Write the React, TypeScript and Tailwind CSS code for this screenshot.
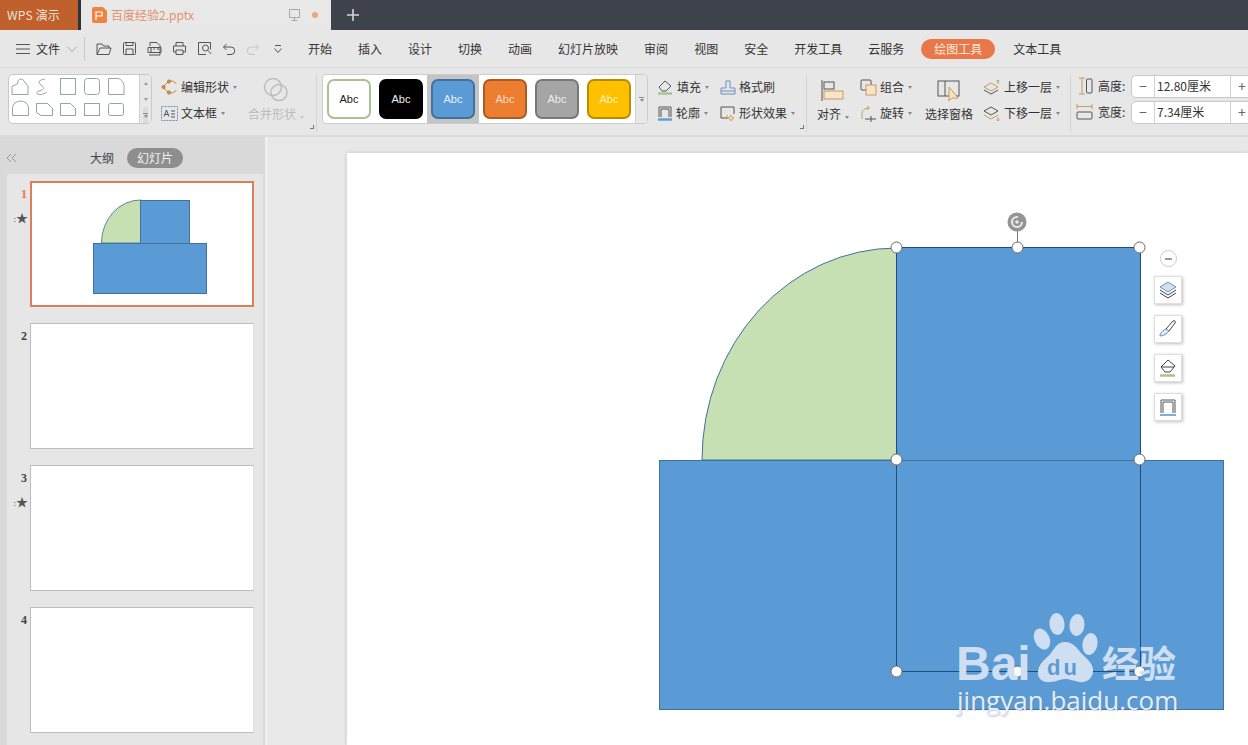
import React from "react";

const cjk = { fontFamily: '"Noto Sans CJK SC","Liberation Sans",sans-serif' };

function I({ w = 18, h = 18, vb, children, cls = "" }: { w?: number; h?: number; vb?: string; children: React.ReactNode; cls?: string }) {
  return (
    <svg width={w} height={h} viewBox={vb ?? `0 0 ${w} ${h}`} fill="none" stroke="#555" strokeWidth="1" className={`shrink-0 ${cls}`}>
      {children}
    </svg>
  );
}

function Caret({ light = false }: { light?: boolean }) {
  return <span className={`inline-block ml-1 border-x-[2.5px] border-x-transparent border-t-[3px] ${light ? "border-t-[#c4c4c4]" : "border-t-[#888]"}`} />;
}

const tabs: [string, string][] = [
  ["开始", "ml-[14px]"], ["插入", "ml-[26px]"], ["设计", "ml-[26px]"], ["切换", "ml-[26px]"], ["动画", "ml-[26px]"],
  ["幻灯片放映", "ml-[26px]"], ["审阅", "ml-[26px]"], ["视图", "ml-[26px]"], ["安全", "ml-[26px]"], ["开发工具", "ml-[26px]"], ["云服务", "ml-[26px]"],
];

function TitleBar() {
  return (
    <div className="flex h-[30px] bg-[#3e424d] shrink-0">
      <div className="w-[78px] bg-[#c0602c] text-[#f3e3d8] text-[12px] tracking-[0.2px] flex items-center pl-[7px]">WPS 演示</div>
      <div className="w-[3px] bg-[#2f323a]" />
      <div className="w-[250px] bg-[#e8e8e8] flex items-center pl-[11px]">
        <svg width="15" height="16" viewBox="0 0 15 16" className="shrink-0">
          <path d="M2 0h9l4 4v10a2 2 0 01-2 2H2a2 2 0 01-2-2V2a2 2 0 012-2z" fill="#ee8442" />
          <path d="M4 13V5h6v4H4" fill="none" stroke="#fff" strokeWidth="1.200" />
        </svg>
        <span className="ml-[4px] text-[12px] text-[#e2926a]">百度经验2.pptx</span>
        <I w={14} h={14} cls="ml-[94px]">
          <rect x="1.500" y="1.500" width="10" height="8" stroke="#aaa" />
          <path d="M6.500 9.500v3M3.500 12.500h6" stroke="#aaa" />
        </I>
        <span className="ml-[10px] w-[6px] h-[6px] rounded-full bg-[#eea677]" />
      </div>
      <div className="ml-[15px] flex items-center">
        <I w={14} h={14}><path d="M7 1v12M1 7h12" stroke="#d5d6d9" strokeWidth="1.600" /></I>
      </div>
    </div>
  );
}

function MenuBar() {
  return (
    <div className="flex items-center h-[38px] bg-[#e7e7e7] text-[12px] text-[#333] shrink-0 border-b border-b-[#dcdcdc]">
      <I w={14} h={12} cls="ml-[16px]"><path d="M0 1.500h14M0 6h14M0 10.500h14" /></I>
      <span className="ml-[6px]">文件</span>
      <I w={12} h={8} cls="ml-[6px]"><path d="M1 1.500l5 5 5-5" stroke="#aaa" /></I>
      <div className="w-px h-[24px] bg-[#c8c8c8] ml-[6px]" />
      <div className="flex items-center gap-[10px] ml-[11px]">
        <I w={16} h={14}><path d="M1 12.500V2h5l1.500 2H13v2M1 12.500h12l2-6.500H4z" /></I>
        <I w={15} h={15}><path d="M1.500 2.500a1 1 0 011-1h10a1 1 0 011 1v10a1 1 0 01-1 1h-10a1 1 0 01-1-1zM4 1.500v3h7v-3M4 13.500V8h7v5.500" /></I>
        <I w={15} h={15}><path d="M3 5V1.500h7l3 3V14H2M1 6.500h13v5H1z" /><path d="M3 8h2M6.500 8h1.500M10 8h2M3 10h2" stroke="#444" /></I>
        <I w={15} h={15}><path d="M4 5V1.500h7V5M4 11H1.500V5h12v6H11M4 9h7v4.500H4z" /></I>
        <I w={16} h={15}><path d="M9 13.500H1.500v-12h12v7" /><circle cx="8.500" cy="7" r="3" /><path d="M10.800 9.300l3.500 3.700" /></I>
      </div>
      <div className="flex items-center gap-[10px] ml-[9px]">
        <I w={14} h={14}><path d="M4.500 2L1.500 5l3 3M1.500 5H9a3.700 3.700 0 010 7.500H5" /></I>
        <I w={14} h={14}><path d="M9.500 2l3 3-3 3M12.500 5H5a3.700 3.700 0 000 7.500h4" stroke="#c4c4c4" /></I>
        <I w={12} h={12} cls="ml-[2px]"><path d="M3 2.500h6M2.500 5.500L6 9.500l3.500-4" /></I>
      </div>
      <div className="flex items-center ml-[10px]">
        {tabs.map(([t, m]) => <span key={t} className={m}>{t}</span>)}
      </div>
      <span className="ml-[17px] w-[74px] h-[20px] rounded-full bg-[#e8774a] text-[#fde9dc] flex items-center justify-center">绘图工具</span>
      <span className="ml-[18px]">文本工具</span>
    </div>
  );
}

function ShapeGallery() {
  const s = "#98a2ac";
  return (
    <div className="w-[144px] h-[50px] shrink-0 bg-white border border-[#c8c8c8] rounded-[5px] flex overflow-hidden">
      <svg width="130" height="48" viewBox="0 0 130 48" fill="none" stroke={s} className="shrink-0">
        <path d="M3 19.500v-8l6-3a3 3 0 016-2.500l4 5v8.500z" />
        <path d="M36 4c-6 1-8 3-4 6s4 4-2 6c-3 1-3 3 0 3.500s6-1 8-2.500" />
        <rect x="51.500" y="3.500" width="15" height="16" />
        <rect x="75.500" y="3.500" width="15" height="16" rx="3" />
        <path d="M99.500 3.500h10q5 2 5.500 7v9h-15.500z" />
        <path d="M3.500 40.500V33a8 7 0 0116 0v7.500z" />
        <path d="M27.500 28.500h11l5 5v7H32l-4.500-3z" />
        <path d="M51.500 28.500h10l5 5v7h-15z" />
        <rect x="75.500" y="28.500" width="15" height="12" />
        <rect x="99.500" y="28.500" width="15" height="12" rx="2" />
      </svg>
      <div className="w-[12px] bg-[#e8e8e8] border-l border-[#d0d0d0] flex flex-col items-center text-[#888]">
        <div className="flex-1 flex items-center justify-center"><span className="border-x-[2.5px] border-x-transparent border-b-[3px] border-b-[#999]" /></div>
        <div className="flex-1 flex items-center justify-center"><span className="border-x-[2.5px] border-x-transparent border-t-[3px] border-t-[#999]" /></div>
        <div className="flex-1 flex flex-col items-center justify-center bg-[#dcdcdc]"><span className="w-[5px] h-px bg-[#888] mb-px" /><span className="border-x-[2.5px] border-x-transparent border-t-[3px] border-t-[#888]" /></div>
      </div>
    </div>
  );
}

function Corner() {
  return <span className="absolute right-[2px] bottom-[3px] w-[4px] h-[4px] border-r border-b border-[#777]" />;
}

function Sep() {
  return <div className="w-px bg-[#d4d4d4] self-stretch shrink-0" />;
}

function Row({ icon, label, caret = true, gap = "ml-[3px]" }: { icon: React.ReactNode; label: string; caret?: boolean; gap?: string }) {
  return (
    <div className="flex items-center h-[26px]">
      {icon}
      <span className={`${gap} text-[12px] text-[#333]`}>{label}</span>
      {caret && <Caret />}
    </div>
  );
}

function Swatch({ bg, border, color, selected = false }: { bg: string; border: string; color: string; selected?: boolean }) {
  return (
    <div className={`w-[52px] h-[48px] flex items-center justify-center shrink-0 ${selected ? "bg-[#c4c4c4]" : ""}`}>
      <div className="w-[44px] h-[40px] rounded-[7px] border-2 flex items-center justify-center text-[11px]" style={{ background: bg, borderColor: border, color, fontFamily: '"Liberation Sans",sans-serif' }}>
        Abc
      </div>
    </div>
  );
}

function SizeRow({ icon, label, value }: { icon: React.ReactNode; label: string; value: string }) {
  return (
    <div className="flex items-center h-[24px]">
      <div className="w-[17px] flex justify-center shrink-0">{icon}</div>
      <span className="ml-[5px] w-[31px] text-[12px] text-[#333]">{label}</span>
      <div className="ml-[2px] w-[123px] h-[23px] flex bg-white border border-[#c8c8c8] rounded-l-[5px] shrink-0 items-center text-[12px] text-[#333]">
        <span className="w-[23px] h-full flex items-center justify-center border-r border-[#d0d0d0] text-[#666] text-[14px]">−</span>
        <span className="flex-1 pl-[2px]">{value}</span>
        <span className="w-[23px] h-full flex items-center justify-center border-l border-[#d0d0d0] text-[#666] text-[14px]">+</span>
      </div>
    </div>
  );
}

function Ribbon() {
  return (
    <div className="flex h-[69px] bg-[#e7e7e7] shrink-0 pt-[6px] pb-[3px] pl-[8px] border-b-[2px] border-b-[#dcdcdc] overflow-hidden">
      <ShapeGallery />
      <div className="flex flex-col ml-[9px] w-[87px] shrink-0">
        <Row label="编辑形状" gap="ml-[2px]" icon={<I w={18} h={16}><path d="M8 2L2 8l6 6M8 2c3 0 6 0 7 3M8 14c3 0 6 0 7-3" stroke="#c8822e" /><circle cx="8" cy="2.500" r="1.500" fill="#e0a050" stroke="#b07020" /><circle cx="2.500" cy="8" r="1.500" fill="#e0a050" stroke="#b07020" /><circle cx="8" cy="13.500" r="1.500" fill="#e0a050" stroke="#b07020" /></I>} />
        <Row label="文本框" icon={<I w={17} h={15}><rect x="0.500" y="0.500" width="16" height="14" stroke="#6f8fc0" strokeDasharray="2 1" /><path d="M3 10.500L5.500 4l2.500 6.500M4 8.500h3" /><path d="M10 5h4M10 8h4M10 11h4" /></I>} />
      </div>
      <div className="w-[58px] ml-[-1px] flex flex-col items-center shrink-0">
        <I w={26} h={26} cls="mt-[3px]"><circle cx="10" cy="10" r="8.500" stroke="#bbb" strokeWidth="1.400" /><circle cx="16" cy="15.500" r="8" stroke="#bbb" strokeWidth="1.400" /></I>
        <span className="text-[12px] text-[#bbb] mt-[2px] whitespace-nowrap">合并形状<Caret light /></span>
      </div>
      <div className="relative w-[11px] shrink-0"><Corner /></div>
      <Sep />
      <div className="ml-[5px] w-[326px] h-[50px] shrink-0 bg-white border border-[#ccc] rounded-[4px] flex items-center overflow-hidden">
        <Swatch bg="#fff" border="#a9c28f" color="#222" />
        <Swatch bg="#000" border="#000" color="#eee" />
        <Swatch bg="#5b9bd5" border="#41719c" color="#e8f1fa" selected />
        <Swatch bg="#ed7d31" border="#ae5a21" color="#f8dcc8" />
        <Swatch bg="#a5a5a5" border="#787878" color="#eee" />
        <Swatch bg="#ffc000" border="#bc8c00" color="#fff0bf" />
        <div className="w-[13px] ml-auto h-full bg-[#e8e8e8] border-l border-[#d0d0d0] flex flex-col items-center justify-center">
          <span className="w-[5px] h-px bg-[#888] mb-px" /><span className="border-x-[2.5px] border-x-transparent border-t-[3px] border-t-[#888]" />
        </div>
      </div>
      <div className="relative w-[158px] shrink-0 pl-[9px]">
        <div className="flex">
          <div className="flex flex-col w-[63px]">
            <Row label="填充" icon={<I w={17} h={17}><path d="M8 2l6 5-5 5H5L2 8z" /><path d="M1 14.500h14" stroke="#a9c28f" strokeWidth="2.400" /></I>} />
            <Row label="轮廓" icon={<I w={16} h={17}><path d="M2 12V2h12v10M4 12V4h8v8" /><path d="M1 14.500h14" stroke="#5b9bd5" strokeWidth="2.400" /></I>} />
          </div>
          <div className="flex flex-col">
            <Row label="格式刷" caret={false} icon={<I w={16} h={17}><path d="M1 15V9h5V2h4v7h5v6zM1 12h14" stroke="#6f8fc0" /></I>} />
            <Row label="形状效果" icon={<I w={16} h={17}><path d="M1 13V2h13v7M1 13h7" /><path d="M5 13l3-3M11 10l1 2 2 1-2 1-1 2-1-2-2-1 2-1z" stroke="#d8a44a" /></I>} />
          </div>
        </div>
        <Corner />
      </div>
      <Sep />
      <div className="flex w-[263px] shrink-0 pl-[9px]">
        <div className="flex flex-col items-center w-[34px]">
          <I w={24} h={24} cls="mt-[5px]"><path d="M1 1v21" stroke="#555" /><rect x="3" y="3" width="10" height="7" stroke="#555" /><rect x="3" y="12" width="19" height="8" fill="#f6e3c8" stroke="#c89a60" /></I>
          <span className="text-[12px] text-[#333] mt-[2px] whitespace-nowrap">对齐<Caret /></span>
        </div>
        <div className="flex flex-col ml-[10px] w-[64px]">
          <Row label="组合" icon={<I w={17} h={17}><rect x="1" y="1" width="10" height="10" rx="1" /><rect x="6" y="6" width="10" height="10" fill="#f6e3c8" stroke="#c89a60" /></I>} />
          <Row label="旋转" icon={<I w={17} h={17}><path d="M2 14V9c0-4 3-6 7-6M7 1l2.500 2-2.500 2" stroke="#c89a60" /><path d="M5 14h11M11 11v6" /></I>} />
        </div>
        <div className="flex flex-col items-center w-[50px]">
          <I w={24} h={24} cls="mt-[5px]"><rect x="1" y="2" width="21" height="15" /><path d="M8 2v15" /><path d="M12 8v14l3-3h6z" fill="#f6e3c8" stroke="#c89a60" /></I>
          <span className="text-[12px] text-[#333] mt-[2px] whitespace-nowrap">选择窗格</span>
        </div>
        <div className="flex flex-col ml-[9px]">
          <Row label="上移一层" icon={<I w={18} h={17}><path d="M1 8l7-4 7 4-7 4z" stroke="#c89a60" /><path d="M1 11l7 4 7-4" stroke="#555" /><path d="M15 5V1M13.500 2.500L15 1l1.500 1.500" stroke="#c89a60" /></I>} />
          <Row label="下移一层" icon={<I w={18} h={17}><path d="M1 6l7-4 7 4-7 4z" stroke="#555" /><path d="M1 10l7 4 7-4" stroke="#c89a60" /><path d="M15 12v4M13.500 14.500L15 16l1.500-1.500" stroke="#c89a60" /></I>} />
        </div>
      </div>
      <Sep />
      <div className="flex flex-col ml-[5px] gap-[2px]">
        <SizeRow label="高度:" value="12.80厘米" icon={<I w={17} h={18}><path d="M3 1h6M3 17h6M6 1v16" stroke="#c89a60" /><rect x="10.500" y="2" width="5.500" height="14" rx="1" /></I>} />
        <SizeRow label="宽度:" value="7.34厘米" icon={<I w={17} h={18}><path d="M1 1v5M16 1v5M1 3.500h15" stroke="#c89a60" /><rect x="1" y="9" width="15" height="7" rx="1" /></I>} />
      </div>
    </div>
  );
}

function Thumb({ n, active = false, star = false, children }: { n: number; active?: boolean; star?: boolean; children?: React.ReactNode }) {
  return (
    <div className="flex">
      <div className="w-[23px] shrink-0 flex flex-col items-end pr-[3px]">
        <span className={`text-[12px] font-bold leading-[13px] mt-[7px] ${active ? "text-[#e8774a]" : "text-[#444]"}`} style={{ fontFamily: '"Liberation Serif",serif' }}>{n}</span>
        {star && <span className="text-[12px] text-[#555] leading-none mt-[11px] -mr-[1px] whitespace-nowrap"><span className="text-[8px] align-[1px]">:</span>★</span>}
      </div>
      <div className={`w-[224px] h-[126px] bg-white shrink-0 ${active ? "border-2 border-[#dd7f56]" : "border border-[#bdbdbd] border-r-[#e0e0e0]"}`}>
        {children}
      </div>
    </div>
  );
}

function Sidebar() {
  return (
    <div className="w-[265px] shrink-0 bg-[#d9d9d9] flex flex-col overflow-hidden">
      <div className="h-[37px] pt-[5px] flex items-center shrink-0 text-[12px]">
        <I w={12} h={10} cls="ml-[6px]"><path d="M5 1L1 5l4 4M10 1L6 5l4 4" stroke="#999" /></I>
        <span className="ml-[72px] text-[#444]">大纲</span>
        <span className="ml-[13px] w-[56px] h-[20px] rounded-full bg-[#8e8e8e] text-[#f2f2f2] flex items-center justify-center">幻灯片</span>
      </div>
      <div className="ml-[7px] mr-[2px] flex-1 bg-[#e6e6e6] pt-[7px] flex flex-col gap-[16px]">
        <Thumb n={1} active star>
          <svg width="220" height="122" viewBox="0 0 220 122">
            <path d="M69.500 60 A39 43 0 0 1 109 17 V60 Z" fill="#c6e0b4" stroke="#5c8a8a" />
            <rect x="108.500" y="17.500" width="49" height="43" fill="#5b9bd5" stroke="#41719c" />
            <rect x="61.500" y="60.500" width="113" height="50" fill="#5b9bd5" stroke="#41719c" />
          </svg>
        </Thumb>
        <Thumb n={2} />
        <Thumb n={3} star />
        <Thumb n={4} />
      </div>
    </div>
  );
}

function Handle({ x, y }: { x: number; y: number }) {
  return <circle cx={x} cy={y} r="5.500" fill="#fff" stroke="#666" strokeWidth="1" />;
}

function ToolBtn({ children }: { children: React.ReactNode }) {
  return (
    <div className="w-[28px] h-[28px] bg-white border border-[#dedede] shadow-[1px_1px_3px_rgba(0,0,0,0.25)] flex items-center justify-center">
      {children}
    </div>
  );
}

function Canvas() {
  return (
    <div className="flex-1 min-w-0 bg-[#e8e8e8] border-l-[3px] border-l-[#efefef] pl-[79px] pt-[16px] overflow-hidden relative">
      <div className="bg-white w-[901px] h-[592px] shadow-[0_0_4px_rgba(0,0,0,0.15)] relative">
        <svg width="901" height="592" viewBox="347 153 901 592" className="absolute left-0 top-0">
          <path d="M702 460 A195 212 0 0 1 896.500 248 V460 Z" fill="#c6e0b4" stroke="#41719c" />
          <rect x="896.500" y="247.500" width="244" height="213" fill="#5b9bd5" stroke="#1f4e79" />
          <rect x="659.500" y="460.500" width="564" height="249" fill="#5b9bd5" stroke="#41719c" />
          <path d="M896.500 247.500V671.500H1140.500V247.500" fill="none" stroke="#1f4e79" />
          <path d="M1017.500 247V231" stroke="#777" />
          <circle cx="1017" cy="222" r="9.500" fill="#949494" />
          <circle cx="1017" cy="222" r="5" fill="none" stroke="#e8e8e8" strokeWidth="2.200" strokeDasharray="24 8" />
          <circle cx="1017" cy="222" r="1.800" fill="#e8e8e8" />
          <Handle x={896.500} y={247.500} /><Handle x={1017.500} y={247.500} /><Handle x={1139.500} y={247.500} />
          <Handle x={896.500} y={459.500} /><Handle x={1139.500} y={459.500} />
          <Handle x={896.500} y={671.500} /><Handle x={1017.500} y={671.500} /><Handle x={1139.500} y={671.500} />
        </svg>

        <div className="absolute left-[807px] top-[97px] w-[28px] flex flex-col items-center">
          <div className="w-[17px] h-[17px] rounded-full bg-white border border-[#ccc] flex items-center justify-center mb-[9px]">
            <span className="w-[7px] h-[2px] bg-[#999]" />
          </div>
          <div className="flex flex-col gap-[11px]">
            <ToolBtn>
              <I w={20} h={20}><path d="M10 2l8 5-8 5-8-5z" fill="#cfe2f3" stroke="#6f8fc0" /><path d="M2 10l8 5 8-5M2 13l8 5 8-5" stroke="#444" /></I>
            </ToolBtn>
            <ToolBtn>
              <I w={20} h={20}><path d="M2 17c0-3 3-6 6-7l3 2c-2 3-6 5-9 5z" stroke="#6f8fc0" fill="#dbe8f5" /><path d="M8 10l7-8c2-1 3 1 2 2l-6 8" stroke="#444" /></I>
            </ToolBtn>
            <ToolBtn>
              <I w={20} h={20}><path d="M10 2l7 6-5 6H7L3 9z" stroke="#444" /><path d="M3 9h13" stroke="#444" /><path d="M2 17.500h15" stroke="#a9c28f" strokeWidth="2.500" /></I>
            </ToolBtn>
            <ToolBtn>
              <I w={20} h={20}><path d="M3 16V3h14v13M5 16V5h10v11" stroke="#555" /><path d="M2 18h16" stroke="#5b9bd5" strokeWidth="1.600" /></I>
            </ToolBtn>
          </div>
        </div>

        <div className="absolute left-[611px] top-[460px] w-[225px] h-[120px] text-[#cfdff1]">
          <svg width="90" height="75" viewBox="0 0 90 75" className="absolute left-[62px] top-0" fill="#cfdff1">
            <ellipse cx="22" cy="26" rx="7.500" ry="11" transform="rotate(-25 22 26)" />
            <ellipse cx="37" cy="11" rx="7.500" ry="11" transform="rotate(-5 37 11)" />
            <ellipse cx="57" cy="12" rx="7.500" ry="11" transform="rotate(5 57 12)" />
            <ellipse cx="70" cy="31" rx="7.500" ry="11" transform="rotate(10 70 31)" />
            <path d="M45 29c8 0 12 6 16 11 6 6 13 11 12 19-1 8-8 11-14 10-5-1-9-3-14-3s-9 3-14 3c-8 1-14-3-13-11 1-8 8-12 13-18 4-5 6-11 14-11z" />
          </svg>
          <span className="absolute left-[-2px] top-[27px] text-[48px] font-bold leading-none" style={{ fontFamily: '"Liberation Sans",sans-serif' }}>Bai</span>
          <span className="absolute left-[89px] top-[44px] text-[22px] font-bold leading-none text-[#5b9bd5] tracking-[3px]" style={{ fontFamily: '"Liberation Sans",sans-serif' }}>du</span>
          <span className="absolute left-[144px] top-[31px] text-[37px] font-bold leading-none whitespace-nowrap" style={cjk}>经验</span>
          <span className="absolute left-[-1px] top-[74px] text-[26px] leading-none whitespace-nowrap text-[#e4edf7] [text-shadow:1px_1px_1px_rgba(120,120,120,0.35)]" style={{ fontFamily: '"Open Sans",sans-serif' }}>jingyan.baidu.com</span>
        </div>
      </div>
    </div>
  );
}

export default function App() {
  return (
    <div className="w-[1248px] h-[745px] overflow-hidden flex flex-col bg-[#e8e8e8]" style={cjk}>
      <TitleBar />
      <MenuBar />
      <Ribbon />
      <div className="flex flex-1 min-h-0">
        <Sidebar />
        <Canvas />
      </div>
    </div>
  );
}
